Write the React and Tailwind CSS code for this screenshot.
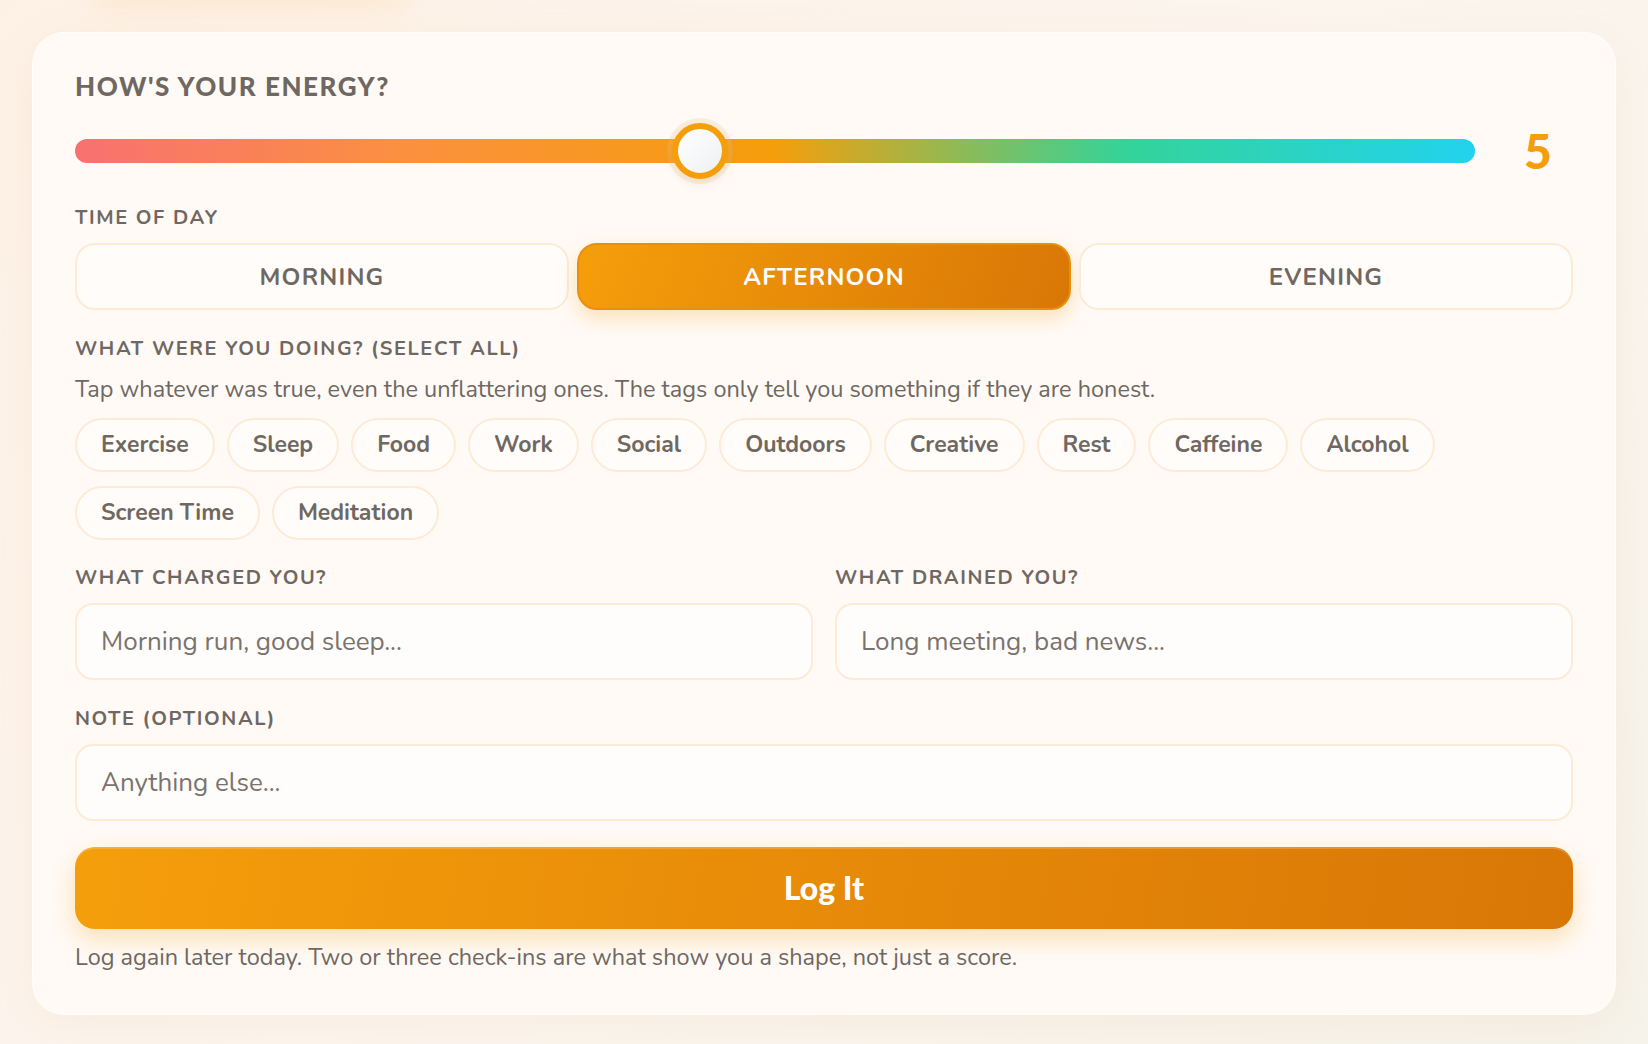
import React, { useState } from 'react';

const TAGS = ['Exercise', 'Sleep', 'Food', 'Work', 'Social', 'Outdoors', 'Creative', 'Rest', 'Caffeine', 'Alcohol', 'Screen Time', 'Meditation'];
const TIMES = ['Morning', 'Afternoon', 'Evening'];

function Label({ children, className = '' }) {
  return (
    <div className={`text-[20px] leading-[23px] font-bold uppercase tracking-[0.08em] text-[#6f6862] ${className}`}>
      {children}
    </div>
  );
}

function Field({ placeholder }) {
  return (
    <input
      placeholder={placeholder}
      className="w-full h-[77px] rounded-[18px] border-2 border-[#fdebd6] bg-[#fffdfb] px-6 text-[26px] text-[#6f6862] placeholder:text-[#7a736d] outline-none"
    />
  );
}

export default function App() {
  const [energy] = useState(5);
  const [time, setTime] = useState('Afternoon');
  const [tags, setTags] = useState([]);

  // thumb position: 56px thumb on a 1-10 range
  const frac = (energy - 1) / 9;

  return (
    <div
      className="min-h-screen w-full p-8 bg-[#fcf3ea] bg-[linear-gradient(135deg,#fdf1e6_0%,#fcf5ee_50%,#f5f3ea_100%)] relative overflow-hidden"
      style={{ fontFamily: 'Nunito, Lato, "Noto Sans", sans-serif' }}
    >
      {/* faint glow from the card above */}
      <div className="absolute left-[90px] top-[-30px] w-[320px] h-[36px] rounded-full bg-[#fbe3c2] blur-[14px] opacity-70" />

      <div className="relative rounded-[32px] bg-[#fffaf6] border border-white/70 shadow-[0_10px_40px_rgba(230,180,130,0.12)] p-[42px]">
        <h2
          className="-mt-[2px] text-[26px] leading-[26px] font-black uppercase text-[#6f6862] tracking-[0.06em]"
          style={{ fontFamily: 'Lato, sans-serif' }}
        >
          How's your energy?
        </h2>

        {/* slider */}
        <div className="mt-[24px] flex items-center gap-5 h-[56px]">
          <div className="relative flex-1 h-[56px] flex items-center">
            <div className="w-full h-6 rounded-full bg-[linear-gradient(90deg,#f87171_0%,#fb923c_25%,#f59e0b_50%,#34d399_75%,#22d3ee_100%)]" />
            <div
              className="absolute top-0 w-[56px] h-[56px] rounded-full border-[6px] border-[#f59e0b] bg-[linear-gradient(135deg,#ffffff,#eef0f3)] shadow-[0_0_0_5px_rgba(230,190,140,0.22),0_4px_10px_rgba(180,120,40,0.15)]"
              style={{ left: `calc((100% - 56px) * ${frac})` }}
            />
          </div>
          <div
            className="w-[78px] pl-2 text-center text-[48px] leading-none font-black text-[#f59e0b]"
            style={{ fontFamily: 'Lato, sans-serif' }}
          >
            {energy}
          </div>
        </div>

        {/* time of day */}
        <Label className="mt-[27px]">Time of day</Label>
        <div className="mt-[14px] grid grid-cols-3 gap-2">
          {TIMES.map((t) => {
            const active = t === time;
            return (
              <button
                key={t}
                onClick={() => setTime(t)}
                className={
                  active
                    ? 'h-[67px] rounded-[20px] border-2 border-[#e8900c] bg-[linear-gradient(110deg,#f59e0b,#d97706)] text-white text-[24px] font-bold uppercase tracking-[0.05em] shadow-[0_8px_20px_rgba(245,158,11,0.28)]'
                    : 'h-[67px] rounded-[20px] border-2 border-[#fdebd6] bg-[#fffcf9] text-[#6f6862] text-[24px] font-bold uppercase tracking-[0.05em]'
                }
              >
                {t}
              </button>
            );
          })}
        </div>

        {/* tags */}
        <Label className="mt-[27px]">What were you doing? (select all)</Label>
        <p className="mt-[14px] text-[23.5px] leading-[30px] text-[#6f6862]">
          Tap whatever was true, even the unflattering ones. The tags only tell you something if they are honest.
        </p>
        <div className="mt-[14px] flex flex-wrap gap-x-3 gap-y-[14px]">
          {TAGS.map((tag) => {
            const on = tags.includes(tag);
            return (
              <button
                key={tag}
                onClick={() => setTags(on ? tags.filter((x) => x !== tag) : [...tags, tag])}
                className={`h-[54px] px-6 rounded-full border-2 text-[23px] font-bold ${
                  on ? 'border-[#f59e0b] bg-[#fef3e2] text-[#b45309]' : 'border-[#fdebd6] bg-[#fffcf9] text-[#6f6862]'
                }`}
              >
                {tag}
              </button>
            );
          })}
        </div>

        {/* charged / drained */}
        <div className="mt-[26px] grid grid-cols-2 gap-[22px]">
          <div>
            <Label>What charged you?</Label>
            <div className="mt-[14px]">
              <Field placeholder="Morning run, good sleep..." />
            </div>
          </div>
          <div>
            <Label>What drained you?</Label>
            <div className="mt-[14px]">
              <Field placeholder="Long meeting, bad news..." />
            </div>
          </div>
        </div>

        <Label className="mt-[27px]">Note (optional)</Label>
        <div className="mt-[14px]">
          <Field placeholder="Anything else..." />
        </div>

        <button
          className="mt-[26px] w-full h-[82px] rounded-[20px] bg-[linear-gradient(100deg,#f59e0b,#d97706)] text-white text-[32px] font-black shadow-[0_10px_24px_rgba(245,158,11,0.28),inset_0_2px_0_rgba(255,255,255,0.18)]"
          style={{ fontFamily: 'Lato, sans-serif' }}
        >
          Log It
        </button>
        <p className="mt-[13px] text-[23.5px] leading-[30px] text-[#6f6862]">
          Log again later today. Two or three check-ins are what show you a shape, not just a score.
        </p>
      </div>
    </div>
  );
}
